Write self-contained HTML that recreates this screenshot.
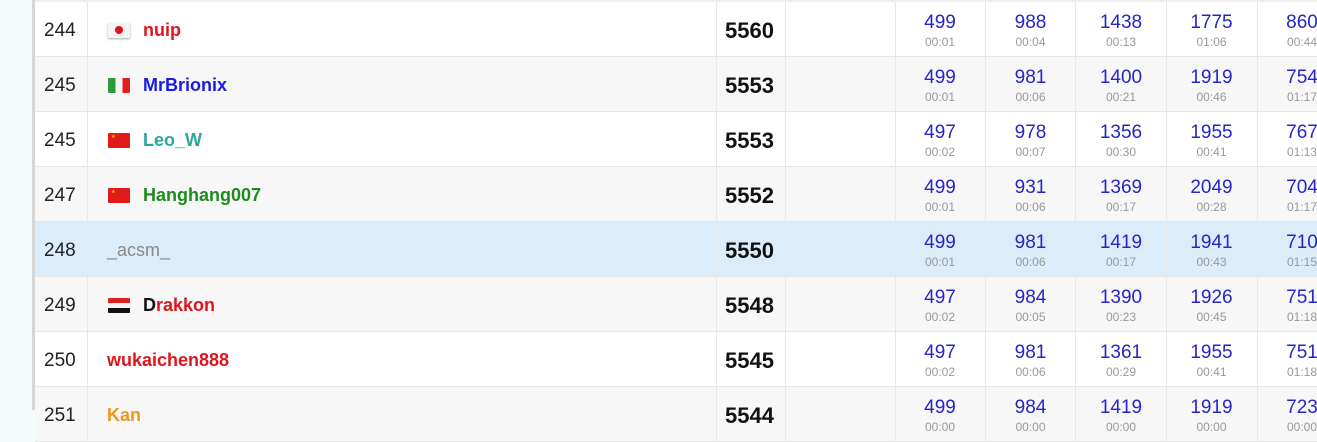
<!DOCTYPE html><html><head><style>
body{margin:0;width:1317px;height:410px;overflow:hidden;background:#f4fbfc;font-family:"Liberation Sans",sans-serif;position:relative}
.bar{position:absolute;left:32px;top:0;width:3px;height:410px;background:#d6d6d6}
.row{position:absolute;left:35px;width:1282px;height:54px;border-bottom:1px solid #e6e6e6;background:#fff}
.row.g{background:#f7f7f7}.row.h{background:#dcedf9}
.c{position:absolute;top:0;height:55px;border-left:1px solid #e8e8e8}
.rk{position:absolute;left:9px;top:18px;font-size:19px;color:#222}
.fl{position:absolute;left:73px;top:21px;width:22px;height:15px;border-radius:1px}
.nm{position:absolute;left:108px;top:18px;font-size:18px;font-weight:bold}
.sc{position:absolute;left:690px;top:16px;font-size:22px;font-weight:bold;color:#111}
.p{position:absolute;top:9px;width:90px;text-align:center}
.p b{display:block;font-weight:normal;font-size:19px;color:#2626c8;line-height:23px}
.p i{display:block;font-style:normal;font-size:12px;color:#999;line-height:16px}
</style></head><body>
<div class="bar"></div>
<div id="t"></div>
<script>
const rows=[
["244","jp","nuip","#e0141c","5560",["499","00:01","988","00:04","1438","00:13","1775","01:06","860","00:44"],""],
["245","it","MrBrionix","#1a1ae0","5553",["499","00:01","981","00:06","1400","00:21","1919","00:46","754","01:17"],"g"],
["245","cn","Leo_W","#2aa89a","5553",["497","00:02","978","00:07","1356","00:30","1955","00:41","767","01:13"],""],
["247","cn","Hanghang007","#1e8a1e","5552",["499","00:01","931","00:06","1369","00:17","2049","00:28","704","01:17"],"g"],
["248","","_acsm_","#888","5550",["499","00:01","981","00:06","1419","00:17","1941","00:43","710","01:15"],"h"],
["249","eg","<span style='color:#111'>D</span>rakkon","#e0141c","5548",["497","00:02","984","00:05","1390","00:23","1926","00:45","751","01:18"],"g"],
["250","","wukaichen888","#e0141c","5545",["497","00:02","981","00:06","1361","00:29","1955","00:41","751","01:18"],""],
["251","","Kan","#e89a20","5544",["499","00:00","984","00:00","1419","00:00","1919","00:00","723","00:00"],"g"]];
const flags={jp:"<div class='fl' style='background:#f4f4f4;box-shadow:0 1px 2px #aaa'><div style='width:8px;height:8px;border-radius:50%;background:#e01020;margin:3px 7px'></div></div>",
it:"<div class='fl' style='background:linear-gradient(90deg,#2a9a3a 33%,#f4f4f4 33% 66%,#e02020 66%)'></div>",
cn:"<div class='fl' style='background:#e01a1a'><span style='position:absolute;left:3px;top:1px;font-size:5px;color:#fd0'>★</span></div>",
eg:"<div class='fl' style='background:linear-gradient(#e02020 33%,#f4f4f4 33% 66%,#111 66%)'></div>"};
let h="";
rows.forEach((r,i)=>{
const top=2+i*55;
h+=`<div class="row ${r[6]}" style="top:${top}px">`;
[52,681,750,860,950,1040,1131,1222].forEach(x=>h+=`<div class="c" style="left:${x}px"></div>`);
h+=`<div class="rk">${r[0]}</div>${r[1]?flags[r[1]]:""}<div class="nm" style="color:${r[3]};${r[1]?"":"left:72px"};${r[2]=="_acsm_"?"font-weight:normal":""}">${r[2]}</div><div class="sc">${r[4]}</div>`;
for(let k=0;k<5;k++)h+=`<div class="p" style="left:${860+k*90.5}px"><b>${r[5][2*k]}</b><i>${r[5][2*k+1]}</i></div>`;
h+="</div>";});
document.getElementById("t").innerHTML=h;
</script>
<div style="position:absolute;left:35px;top:0;width:1282px;height:2px;background:#eee"></div>
</body></html>
